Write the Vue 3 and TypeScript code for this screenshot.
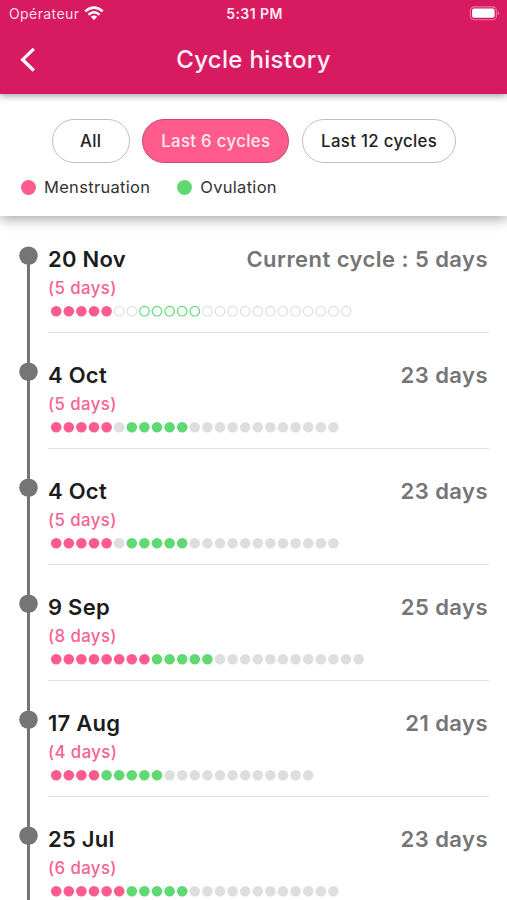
<script setup lang="ts">
import { ref } from 'vue'

interface Cycle {
  date: string
  period: number
  gap: number
  ovulation: number
  rest: number
  label: string
  current?: boolean
}

const filters: string[] = ['All', 'Last 6 cycles', 'Last 12 cycles']
const selected = ref<string>('Last 6 cycles')

const cycles: Cycle[] = [
  { date: '20 Nov', period: 5, gap: 2, ovulation: 5, rest: 12, label: 'Current cycle : 5 days', current: true },
  { date: '4 Oct', period: 5, gap: 1, ovulation: 5, rest: 12, label: '23 days' },
  { date: '4 Oct', period: 5, gap: 1, ovulation: 5, rest: 12, label: '23 days' },
  { date: '9 Sep', period: 8, gap: 0, ovulation: 5, rest: 12, label: '25 days' },
  { date: '17 Aug', period: 4, gap: 0, ovulation: 5, rest: 12, label: '21 days' },
  { date: '25 Jul', period: 6, gap: 0, ovulation: 5, rest: 12, label: '23 days' },
]

const PITCH = 12.6

function dots(c: Cycle): string[] {
  const suffix = c.current ? ' hollow' : ''
  return [
    ...Array<string>(c.period).fill('pink'),
    ...Array<string>(c.gap).fill('grey' + suffix),
    ...Array<string>(c.ovulation).fill('green' + suffix),
    ...Array<string>(c.rest).fill('grey' + suffix),
  ]
}
</script>

<template>
  <div class="screen">
    <header class="header">
      <div class="status">
        <div class="carrier">
          <span>Opérateur</span>
          <svg class="wifi" width="20" height="15" viewBox="0 0 20 15">
            <g fill="none" stroke="#fff" stroke-width="2.5">
              <path d="M1.3 5.4 Q10 -2.2 18.7 5.4" />
              <path d="M4.5 8.7 Q10 3.8 15.5 8.7" />
            </g>
            <path d="M6.8 10.7 Q10 8.3 13.2 10.7 L10 14 Z" fill="#fff" />
          </svg>
        </div>
        <span class="time">5:31 PM</span>
        <div class="power">
          <svg width="31" height="15" viewBox="0 0 31 15">
            <rect x="1.4" y="0.9" width="26" height="12.8" rx="3.8" fill="none" stroke="#fff" stroke-opacity="0.4" stroke-width="1.1" />
            <rect x="3.1" y="2.6" width="22.5" height="9.2" rx="1.8" fill="#fff" />
            <path d="M28.8 5.2 Q31.6 7.3 28.8 9.4 Z" fill="#fff" fill-opacity="0.5" />
          </svg>
        </div>
      </div>
      <div class="bar">
        <svg class="back" width="16" height="26" viewBox="0 0 16 26">
          <path d="M13.8 1.9 L2.6 12.7 L13.8 23.5" fill="none" stroke="#fff" stroke-width="3.2" />
        </svg>
        <h1>Cycle history</h1>
      </div>
    </header>

    <section class="filters">
      <div class="chips">
        <button
          v-for="f in filters"
          :key="f"
          class="chip"
          :class="{ active: f === selected }"
          @click="selected = f"
        >{{ f }}</button>
      </div>
      <div class="legend">
        <span class="key"><i class="swatch menstruation"></i>Menstruation</span>
        <span class="key"><i class="swatch ovulation"></i>Ovulation</span>
      </div>
    </section>

    <main class="timeline">
      <article v-for="(c, i) in cycles" :key="i" class="cycle">
        <svg class="rail" width="19" height="116" viewBox="0 0 19 116">
          <rect x="8" y="0" width="3" height="116" :class="{ first: i === 0 }" />
          <circle cx="9.5" cy="9.7" r="9.3" />
        </svg>
        <div class="body">
          <div class="top">
            <span class="date">{{ c.date }}</span>
            <span class="length">{{ c.label }}</span>
          </div>
          <div class="period">({{ c.period }} days)</div>
          <svg class="dots" width="330" height="12" viewBox="0 0 330 12">
            <circle
              v-for="(d, j) in dots(c)"
              :key="j"
              :class="d"
              :cx="8.2 + j * PITCH"
              cy="6.2"
              :r="d.includes('hollow') ? 4.8 : 5.3"
            />
          </svg>
        </div>
      </article>
    </main>
  </div>
</template>

<style>
body {
  margin: 0;
  background: #fff;
}
</style>

<style scoped>
.screen {
  height: 900px;
  overflow: hidden;
  display: flex;
  flex-direction: column;
  background: #fff;
  font-family: Inter, "Liberation Sans", sans-serif;
}
.header {
  flex: none;
  height: 94px;
  box-sizing: border-box;
  background: #d81b60;
  color: #fff;
  box-shadow: 0 2px 7px rgba(0, 0, 0, 0.36);
  position: relative;
  z-index: 2;
}
.status {
  height: 27px;
  display: grid;
  grid-template-columns: 1fr auto 1fr;
  align-items: center;
  padding: 0 7px 0 9px;
  font-size: 14px;
}
.carrier {
  display: flex;
  align-items: center;
  gap: 5px;
  letter-spacing: 0.4px;
  color: #fbdce7;
}
.time {
  font-weight: 600;
  letter-spacing: 0.45px;
  color: #fdeaf1;
}
.power {
  display: flex;
  justify-content: flex-end;
}
.bar {
  height: 66px;
  display: grid;
  grid-template-columns: 40px 1fr 40px;
  align-items: center;
}
.back {
  margin-left: 20px;
}
h1 {
  margin: 0;
  text-align: center;
  font-size: 24px;
  line-height: 30px;
  font-weight: 500;
  letter-spacing: 0.3px;
  color: #fff0f6;
}
.filters {
  flex: none;
  height: 122px;
  box-sizing: border-box;
  padding-top: 25px;
  background: #fff;
  box-shadow: 0 3px 12px rgba(0, 0, 0, 0.36);
  position: relative;
  z-index: 1;
}
.chips {
  display: flex;
  justify-content: center;
  gap: 12.5px;
  padding-left: 1px;
}
.chip {
  height: 44px;
  box-sizing: border-box;
  padding: 0 18.2px;
  border: 1px solid #bfbfbf;
  border-radius: 22px;
  background: #fff;
  color: #222;
  font-family: inherit;
  font-size: 16.8px;
  font-weight: 500;
  letter-spacing: 0.32px;
  white-space: nowrap;
}
.chip:first-child {
  padding: 0 27.3px;
}
.chip.active {
  background: #ff5c8d;
  border-color: #c9496f;
  color: #ffe9f0;
}
.legend {
  display: flex;
  gap: 27px;
  padding: 13px 0 0 21px;
  font-size: 16.5px;
  line-height: 22px;
  letter-spacing: 0.3px;
  color: #333;
}
.key {
  display: flex;
  align-items: center;
  gap: 8px;
}
.swatch {
  width: 15px;
  height: 15px;
  border-radius: 50%;
}
.menstruation {
  background: #ff5c8d;
}
.ovulation {
  background: #61d973;
}
.timeline {
  padding: 30px 18px 0 19px;
}
.cycle {
  height: 116px;
  display: flex;
  gap: 10px;
}
.rail {
  flex: none;
  fill: #757575;
}
.rail .first {
  clip-path: inset(8px 0 0 0);
}
.body {
  flex: 1;
  height: 87px;
  box-sizing: border-box;
  border-bottom: 1.5px solid #e2e2e2;
}
.top {
  display: flex;
  justify-content: space-between;
  font-size: 22px;
  line-height: 26px;
  font-weight: 600;
  letter-spacing: 0.4px;
}
.date {
  color: #1c1c1c;
  letter-spacing: 0.25px;
}
.length {
  color: #757575;
  letter-spacing: 0.45px;
  margin-right: 1px;
}
.period {
  margin-top: 5px;
  font-size: 16.8px;
  line-height: 22px;
  font-weight: 500;
  letter-spacing: 0.4px;
  color: #f8628f;
}
.dots {
  display: block;
  margin-top: 6px;
}
.pink {
  fill: #ff5c8d;
}
.green {
  fill: #61d973;
}
.grey {
  fill: #dedede;
}
.hollow {
  fill: none;
  stroke: #dedede;
  stroke-width: 1.2px;
}
.green.hollow {
  stroke: #61d973;
}
</style>
